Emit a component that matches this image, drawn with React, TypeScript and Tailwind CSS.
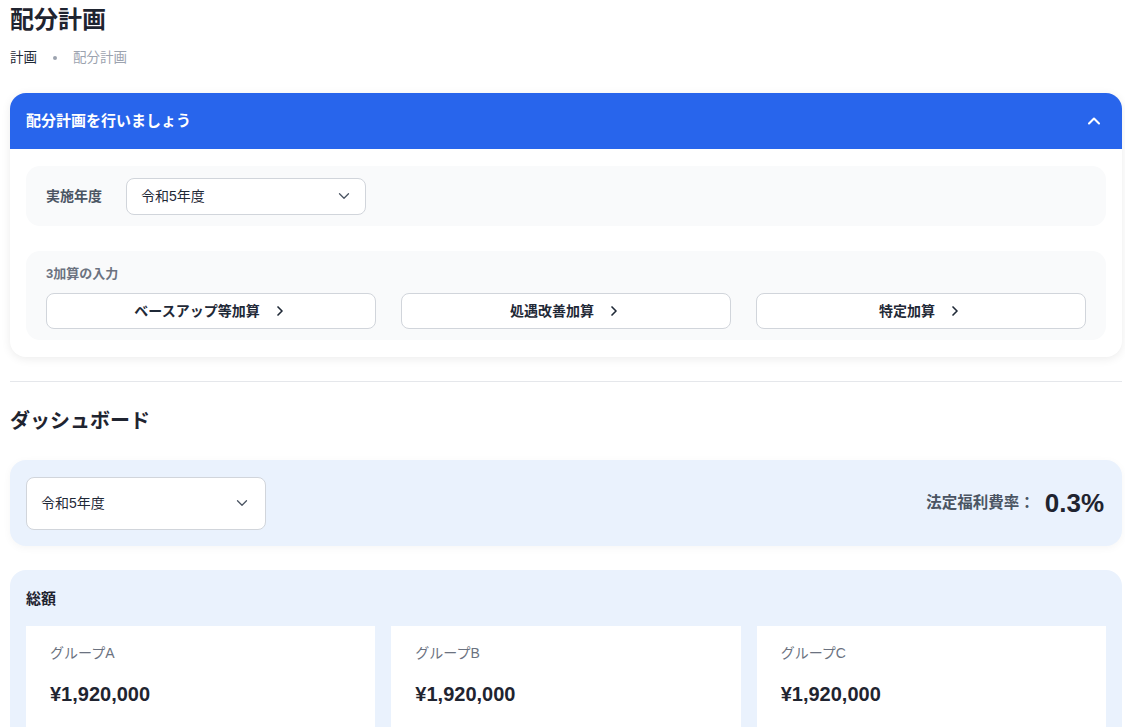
import React from 'react';
import { ChevronDown, ChevronUp, ChevronRight } from 'lucide-react';

const font = { fontFamily: '"Liberation Sans", "Noto Sans CJK JP", sans-serif' };

const groups = [
  { name: 'グループA', amount: '¥1,920,000' },
  { name: 'グループB', amount: '¥1,920,000' },
  { name: 'グループC', amount: '¥1,920,000' },
];

const addons = ['ベースアップ等加算', '処遇改善加算', '特定加算'];

const App: React.FC = () => {
  return (
    <div className="min-h-screen bg-white text-[#1f2937] pl-[10px] pr-[3px] pt-[4px]" style={font}>
      {/* Page header */}
      <h1 className="text-[24px] font-bold leading-[32px] text-[#1f2430]">配分計画</h1>
      <div className="mt-[13px] flex items-center text-[13.5px] leading-[18px]">
        <span className="text-[#1f2937]">計画</span>
        <span className="mx-[16px] h-[4px] w-[4px] rounded-full bg-[#9ca3af]"></span>
        <span className="text-[#9ca3af]">配分計画</span>
      </div>

      {/* Plan card */}
      <div className="mt-[26px] rounded-[16px] bg-white shadow-[0_2px_10px_rgba(0,0,0,0.08)]">
        <div className="flex h-[56px] items-center justify-between rounded-t-[16px] bg-[#2865ec] pl-[16px] pr-[18px]">
          <span className="text-[15px] font-bold text-white">配分計画を行いましょう</span>
          <ChevronUp className="h-[20px] w-[20px] text-white" strokeWidth={2.5} />
        </div>
        <div className="flex flex-col gap-[25px] px-[16px] pb-[17px] pt-[17px]">
          <div className="flex h-[60px] items-center rounded-[14px] bg-[#f9fafb] px-[20px]">
            <span className="w-[80px] text-[14px] font-bold text-[#4b5563]">実施年度</span>
            <div className="flex h-[37px] w-[240px] items-center justify-between rounded-[8px] border border-[#d1d5db] bg-white pl-[14px] pr-[12px]">
              <span className="text-[14px] text-[#1f2937]">令和5年度</span>
              <ChevronDown className="h-[18px] w-[18px] text-[#4b5563]" strokeWidth={1.75} />
            </div>
          </div>
          <div className="rounded-[14px] bg-[#f9fafb] px-[20px] pb-[11px] pt-[14px]">
            <div className="text-[13px] font-bold leading-[18px] text-[#6b7280]">3加算の入力</div>
            <div className="mt-[10px] grid grid-cols-3 gap-[25px]">
              {addons.map((a) => (
                <div
                  key={a}
                  className="flex h-[36px] items-center justify-center gap-[12px] rounded-[8px] border border-[#d1d5db] bg-white"
                >
                  <span className="text-[14px] font-bold text-[#1f2937]">{a}</span>
                  <ChevronRight className="h-[16px] w-[16px] text-[#1f2937]" strokeWidth={2.5} />
                </div>
              ))}
            </div>
          </div>
        </div>
      </div>

      <hr className="mt-[24px] border-t border-[#e5e7eb]" />

      <h2 className="mt-[25px] text-[20px] font-bold leading-[28px] text-[#1f2430]">ダッシュボード</h2>

      {/* Year / rate */}
      <div className="mt-[25px] flex h-[86px] items-center justify-between rounded-[16px] bg-[#eaf2fd] pl-[16px] pr-[18px] shadow-[0_2px_8px_rgba(0,0,0,0.04)]">
        <div className="flex h-[53px] w-[240px] items-center justify-between rounded-[8px] border border-[#d1d5db] bg-white pl-[14px] pr-[14px]">
          <span className="text-[14px] text-[#1f2937]">令和5年度</span>
          <ChevronDown className="h-[18px] w-[18px] text-[#4b5563]" strokeWidth={1.75} />
        </div>
        <div className="flex items-center gap-[10px]">
          <span className="text-[15.5px] font-bold text-[#4b5563]">法定福利費率：</span>
          <span className="text-[26px] font-bold text-[#1f2430]">0.3%</span>
        </div>
      </div>

      {/* Totals */}
      <div className="mt-[24px] rounded-t-[16px] bg-[#eaf2fd] px-[16px] pt-[18px]">
        <div className="text-[15px] font-bold leading-[22px] text-[#1f2430]">総額</div>
        <div className="mt-[16px] grid grid-cols-3 gap-[16px]">
          {groups.map((g) => (
            <div key={g.name} className="h-[120px] bg-white px-[24px] pt-[18px]">
              <div className="text-[14px] leading-[18px] text-[#6b7280]">{g.name}</div>
              <div className="mt-[18px] text-[20px] font-bold leading-[28px] text-[#1f2430]">{g.amount}</div>
            </div>
          ))}
        </div>
      </div>
    </div>
  );
};

export default App;
